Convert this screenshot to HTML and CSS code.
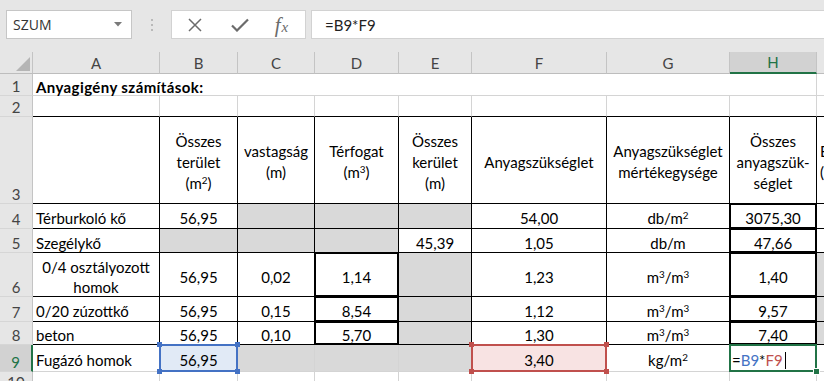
FILE: index.html
```html
<!DOCTYPE html>
<html lang="hu">
<head>
<meta charset="utf-8">
<title>Anyagigény számítások</title>
<link rel="stylesheet" href="styles.css">
</head>
<body>
<div class="app">
  <div class="fbar">
    <div class="namebox">
      <span>SZUM</span>
      <svg class="dd" width="8" height="5" viewBox="0 0 8 5"><path d="M0 0 H8 L4 4.5 Z" fill="#7a7a7a"/></svg>
    </div>
    <div class="grip"><i></i><i></i><i></i></div>
    <div class="fxbtns">
      <div class="btn">
        <svg width="14" height="14" viewBox="0 0 14 14"><path d="M1 1 L13 13 M13 1 L1 13" stroke="#6b6b6b" stroke-width="1.5" fill="none"/></svg>
      </div>
      <div class="btn">
        <svg width="18" height="14" viewBox="0 0 18 14"><path d="M1 7.5 L6 12.5 L17 1.5" stroke="#6b6b6b" stroke-width="2.2" fill="none"/></svg>
      </div>
      <div class="btn fx"><span class="f">f</span><span class="x">x</span></div>
    </div>
    <div class="finput">=B9*F9</div>
  </div>

  <div class="sheet">
    <!-- column headers -->
    <div class="hd corner"><svg width="33" height="22" viewBox="0 0 33 22"><path d="M16 19 H30 V5 Z" fill="#b5b5b5"/></svg></div>
    <div class="hd">A</div>
    <div class="hd">B</div>
    <div class="hd">C</div>
    <div class="hd">D</div>
    <div class="hd">E</div>
    <div class="hd">F</div>
    <div class="hd">G</div>
    <div class="hd sel">H</div>
    <div class="hd last"></div>

    <!-- row 1 -->
    <div class="rh">1</div>
    <div class="c l title span8"><span>Anyagigény számítások:</span></div>
    <div class="c i"></div>

    <!-- row 2 -->
    <div class="rh">2</div>
    <div class="c kb"></div>
    <div class="c kb"></div>
    <div class="c kb"></div>
    <div class="c kb"></div>
    <div class="c kb"></div>
    <div class="c kb"></div>
    <div class="c kb"></div>
    <div class="c kb"></div>
    <div class="c i kb"></div>

    <!-- row 3 -->
    <div class="rh">3</div>
    <div class="c k"></div>
    <div class="c k hdr"><span>Összes<br>terület<br>(m<sup>2</sup>)</span></div>
    <div class="c k hdr"><span>vastagság<br>(m)</span></div>
    <div class="c k hdr"><span>Térfogat<br>(m<sup>3</sup>)</span></div>
    <div class="c k hdr"><span>Összes<br>kerület<br>(m)</span></div>
    <div class="c k hdr"><span>Anyagszükséglet</span></div>
    <div class="c k hdr"><span>Anyagszükséglet<br>mértékegysége</span></div>
    <div class="c k hdr"><span>Összes<br>anyagszük-<br>séglet</span></div>
    <div class="c i kb hdr l"><span>Egységár<br>(Ft)</span></div>

    <!-- row 4 -->
    <div class="rh">4</div>
    <div class="c k l"><span>Térburkoló kő</span></div>
    <div class="c k"><span>56,95</span></div>
    <div class="c k g"></div>
    <div class="c k g"></div>
    <div class="c k g"></div>
    <div class="c k"><span>54,00</span></div>
    <div class="c k"><span>db/m<sup>2</sup></span></div>
    <div class="c k tk"><span>3075,30</span></div>
    <div class="c i kb"></div>

    <!-- row 5 -->
    <div class="rh">5</div>
    <div class="c k l"><span>Szegélykő</span></div>
    <div class="c k g"></div>
    <div class="c k g"></div>
    <div class="c k g"></div>
    <div class="c k"><span>45,39</span></div>
    <div class="c k"><span>1,05</span></div>
    <div class="c k"><span>db/m</span></div>
    <div class="c k tk"><span>47,66</span></div>
    <div class="c i kb"></div>

    <!-- row 6 -->
    <div class="rh">6</div>
    <div class="c k wrap"><span>0/4 osztályozott<br>homok</span></div>
    <div class="c k"><span>56,95</span></div>
    <div class="c k"><span>0,02</span></div>
    <div class="c k tk"><span>1,14</span></div>
    <div class="c k g"></div>
    <div class="c k"><span>1,23</span></div>
    <div class="c k"><span>m<sup>3</sup>/m<sup>3</sup></span></div>
    <div class="c k tk"><span>1,40</span></div>
    <div class="c i kb g"></div>

    <!-- row 7 -->
    <div class="rh">7</div>
    <div class="c k l"><span>0/20 zúzottkő</span></div>
    <div class="c k"><span>56,95</span></div>
    <div class="c k"><span>0,15</span></div>
    <div class="c k tk"><span>8,54</span></div>
    <div class="c k g"></div>
    <div class="c k"><span>1,12</span></div>
    <div class="c k"><span>m<sup>3</sup>/m<sup>3</sup></span></div>
    <div class="c k tk"><span>9,57</span></div>
    <div class="c i kb g"></div>

    <!-- row 8 -->
    <div class="rh">8</div>
    <div class="c k l"><span>beton</span></div>
    <div class="c k"><span>56,95</span></div>
    <div class="c k"><span>0,10</span></div>
    <div class="c k tk"><span>5,70</span></div>
    <div class="c k g"></div>
    <div class="c k"><span>1,30</span></div>
    <div class="c k"><span>m<sup>3</sup>/m<sup>3</sup></span></div>
    <div class="c k tk"><span>7,40</span></div>
    <div class="c i kb g"></div>

    <!-- row 9 -->
    <div class="rh sel">9</div>
    <div class="c l"><span>Fugázó homok</span></div>
    <div class="c ref blue"><span>56,95</span><b class="h tl"></b><b class="h tr"></b><b class="h bl"></b><b class="h br"></b></div>
    <div class="c g"></div>
    <div class="c g"></div>
    <div class="c g"></div>
    <div class="c ref red"><span>3,40</span><b class="h tl"></b><b class="h tr"></b><b class="h bl"></b><b class="h br"></b></div>
    <div class="c"><span>kg/m<sup>2</sup></span></div>
    <div class="c l edit"><span>=<span class="rb">B9</span>*<span class="rr">F9</span></span><span class="caret"></span><b class="h br"></b></div>
    <div class="c i"></div>

    <!-- row 10 -->
    <div class="rh">10</div>
    <div class="c"></div>
    <div class="c"></div>
    <div class="c"></div>
    <div class="c"></div>
    <div class="c"></div>
    <div class="c"></div>
    <div class="c"></div>
    <div class="c"></div>
    <div class="c i"></div>
  </div>
</div>
</body>
</html>
```

FILE: styles.css
```css
html, body {
  margin: 0;
  padding: 0;
}
body {
  width: 824px;
  height: 381px;
  overflow: hidden;
  background: #e6e6e6;
  font-family: Lato, "Liberation Sans", sans-serif;
}
.app {
  display: flex;
  flex-direction: column;
}

/* formula bar */
.fbar {
  height: 52px;
  box-sizing: border-box;
  padding: 10px 0 0 6px;
  display: flex;
  align-items: flex-start;
}
.namebox {
  width: 126px;
  height: 29px;
  box-sizing: border-box;
  background: #fff;
  border: 1px solid #c6c6c6;
  display: flex;
  align-items: center;
  justify-content: space-between;
  padding: 0 9px 0 6px;
  font-family: "Open Sans", sans-serif;
  font-size: 14px;
  color: #333;
}
.grip {
  width: 39px;
  height: 29px;
  display: flex;
  flex-direction: column;
  align-items: center;
  justify-content: center;
  gap: 3px;
}
.grip i {
  display: block;
  width: 2px;
  height: 2px;
  background: #b9b9b9;
}
.fxbtns {
  width: 135px;
  height: 29px;
  box-sizing: border-box;
  background: #fff;
  border: 1px solid #d2d2d2;
  display: grid;
  grid-template-columns: 45px 45px 1fr;
}
.btn {
  display: flex;
  align-items: center;
  justify-content: center;
}
.fx {
  font-family: "Liberation Serif", serif;
  font-style: italic;
  color: #6b6b6b;
  align-items: baseline;
  padding-top: 1px;
  padding-right: 4px;
}
.fx .f { font-size: 21px; line-height: 26px; }
.fx .x { font-size: 15px; margin-left: 1px; }
.finput {
  flex: 1;
  margin-left: 5px;
  height: 29px;
  box-sizing: border-box;
  background: #fff;
  border: 1px solid #d2d2d2;
  border-right: none;
  padding-left: 13px;
  display: flex;
  align-items: center;
  font-size: 15px;
  color: #222;
}

/* sheet grid */
.sheet {
  display: grid;
  grid-template-columns: 33px 127px 78px 77px 84px 73px 135px 123px 87px minmax(0, 1fr);
  grid-template-rows: 22px 22px 21px 87px 25px 24px 44px 25px 23px 27px 20px;
  background: #fff;
}
.hd {
  background: #e6e6e6;
  border-right: 1px solid #c4c4c4;
  border-bottom: 1px solid #bdbdbd;
  display: flex;
  align-items: center;
  justify-content: center;
  font-size: 15px;
  color: #444;
  box-sizing: border-box;
}
.hd.corner { display: block; }
.hd.corner svg { display: block; }
.hd.sel {
  background: #d2d2d2;
  color: #217346;
  border-bottom: 2px solid #217346;
}
.hd.last { border-right: none; }

.rh {
  background: #e6e6e6;
  border-right: 1px solid #c4c4c4;
  border-bottom: 1px solid #d6d6d6;
  display: flex;
  align-items: flex-end;
  justify-content: center;
  font-size: 15px;
  line-height: 15px;
  padding-bottom: 1px;
  color: #444;
  box-sizing: border-box;
}
.rh.sel {
  background: #d2d2d2;
  color: #217346;
  border-right: 2px solid #217346;
}

.c {
  position: relative;
  box-sizing: border-box;
  background: #fff;
  border-right: 1px solid #d4d4d4;
  border-bottom: 1px solid #d4d4d4;
  display: flex;
  align-items: center;
  justify-content: center;
  text-align: center;
  padding: 4px 3px 0;
  font-size: 15px;
  line-height: 20px;
  color: #000;
  white-space: nowrap;
  min-width: 0;
}
.l { justify-content: flex-start; text-align: left; }
.g { background: #d9d9d9; }
.k { border-right-color: #000; border-bottom-color: #000; }
.kb { border-bottom-color: #000; }
.i { border-right: none; overflow: hidden; }
.span8 { grid-column: span 8; }
.title { font-weight: bold; overflow: visible; letter-spacing: 0.4px; }
.hdr { line-height: 21px; }
.wrap { line-height: 20px; }
sup {
  font-size: 0.66em;
  line-height: 0;
  vertical-align: 0.5em;
}

/* medium borders */
.tk::after {
  content: "";
  position: absolute;
  top: -1px;
  left: -1px;
  right: -1px;
  bottom: -1px;
  border: 2px solid #000;
  z-index: 1;
  pointer-events: none;
}

/* formula references */
.ref::after {
  content: "";
  position: absolute;
  top: -1px;
  left: -1px;
  right: -1px;
  bottom: -1px;
  border: 2px solid;
  z-index: 2;
}
.blue { background: #e1eaf6; }
.blue::after { border-color: #4472c4; }
.blue .h { background: #4472c4; }
.red { background: #f8e3e3; }
.red::after { border-color: #c0504d; }
.red .h { background: #c0504d; }
.h {
  position: absolute;
  width: 5px;
  height: 5px;
  z-index: 3;
}
.h.tl { top: -3px; left: -3px; }
.h.tr { top: -3px; right: -3px; }
.h.bl { bottom: -3px; left: -3px; }
.h.br { bottom: -3px; right: -3px; }

.edit { padding-left: 2px; }
.edit::after {
  content: "";
  position: absolute;
  top: -1px;
  left: -1px;
  right: -1px;
  bottom: -1px;
  border: 2px solid #217346;
  z-index: 2;
}
.edit .h { background: #217346; border: 1px solid #fff; width: 5px; height: 5px; bottom: -4px; right: -4px; }
.rb { color: #4472c4; }
.rr { color: #c0504d; }
.caret {
  display: inline-block;
  width: 1px;
  height: 17px;
  background: #000;
  margin-left: 2px;
}
```
